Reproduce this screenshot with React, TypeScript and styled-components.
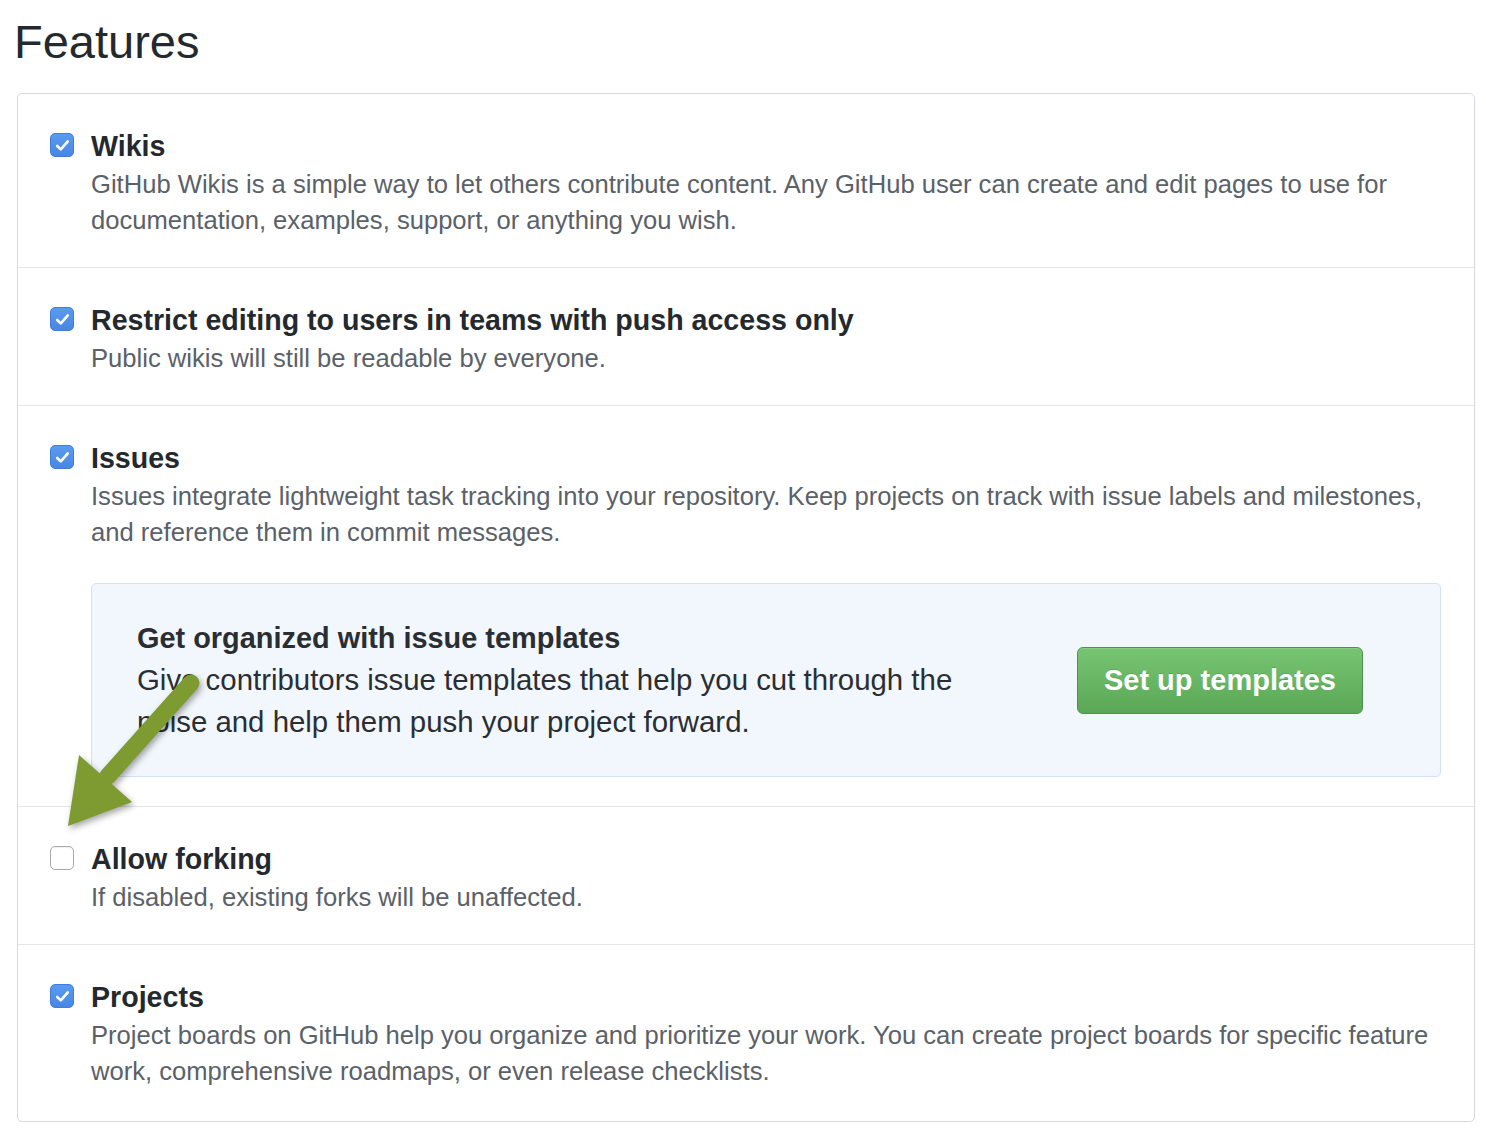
import React from "react";
import styled, { createGlobalStyle } from "styled-components";

const GlobalStyle = createGlobalStyle`
  html, body { margin: 0; padding: 0; background: #ffffff; }
  body {
    font-family: "Liberation Sans", Arial, Helvetica, sans-serif;
    color: #24292e;
    -webkit-font-smoothing: antialiased;
  }
  * { box-sizing: border-box; }
`;

const Page = styled.div`
  position: relative;
  width: 1486px;
  min-height: 1132px;
  padding: 18px 11px 12px 17px;
`;

const Heading = styled.h1`
  margin: 0 0 28px -3px;
  font-size: 47px;
  line-height: 47px;
  font-weight: 400;
  color: #24292e;
`;

const Box = styled.div`
  border: 1px solid #d6d9dd;
  border-radius: 5px;
  background: #fff;
`;

const Row = styled.div<{ $last?: boolean }>`
  display: flex;
  gap: 17px;
  padding: 34px 14px ${(p) => (p.$last ? "32px" : "29px")} 32px;
  & + & {
    border-top: 1px solid #e3e5e8;
  }
`;

const CheckBox = styled.span<{ $checked: boolean }>`
  flex: none;
  width: 24px;
  height: 24px;
  margin-top: 5px;
  border-radius: 5px;
  display: flex;
  align-items: center;
  justify-content: center;
  background: ${(p) => (p.$checked ? "linear-gradient(#5a9af0, #4787e3)" : "#ffffff")};
  border: ${(p) => (p.$checked ? "1px solid #3f7fd9" : "1.5px solid #a9a9a9")};
  box-shadow: ${(p) => (p.$checked ? "none" : "inset 0 1px 1px rgba(0,0,0,0.06)")};
`;

const Content = styled.div`
  flex: 1;
  min-width: 0;
`;

const Title = styled.div`
  font-size: 28.6px;
  line-height: 36px;
  font-weight: 700;
  color: #24292e;
  margin-bottom: 2px;
`;

const Desc = styled.div`
  font-size: 25.6px;
  line-height: 36px;
  color: #5a6168;
`;

const Notice = styled.div`
  margin: 33px 19px 0 0;
  padding: 33px 77px 33px 45px;
  background: #f2f7fe;
  border: 1px solid #d3e3f7;
  border-radius: 5px;
  display: flex;
  align-items: center;
  justify-content: space-between;
`;

const NoticeText = styled.div`
  max-width: 870px;
`;

const NoticeTitle = styled.div`
  font-size: 28.9px;
  line-height: 42px;
  font-weight: 700;
  color: #2a2e33;
`;

const NoticeBody = styled.div`
  font-size: 29.4px;
  line-height: 42px;
  color: #2a2e33;
`;

const GreenButton = styled.button`
  flex: none;
  height: 67px;
  padding: 0 26px;
  border: 1px solid #4b9447;
  border-radius: 6px;
  background: linear-gradient(#77c472, #5aa856);
  color: #ffffff;
  font-family: "Liberation Sans", Arial, Helvetica, sans-serif;
  font-size: 29px;
  font-weight: 700;
  text-shadow: 0 -1px 0 rgba(0, 0, 0, 0.12);
  box-shadow: inset 0 1px 0 rgba(255, 255, 255, 0.15);
  cursor: pointer;
`;

const ArrowOverlay = styled.svg`
  position: absolute;
  left: 50px;
  top: 660px;
  width: 170px;
  height: 185px;
  overflow: visible;
  pointer-events: none;
  filter: drop-shadow(2px 3px 3px rgba(0, 0, 0, 0.35));
`;

const Check = () => (
  <svg width="15" height="13" viewBox="0 0 15 13">
    <path d="M2.2 7 L5.8 10.4 L12.8 2.4" fill="none" stroke="#fff" strokeWidth="2.6" strokeLinecap="round" strokeLinejoin="round" />
  </svg>
);

type Item = { title: string; desc: string; checked: boolean };

const items: Item[] = [
  {
    title: "Wikis",
    desc: "GitHub Wikis is a simple way to let others contribute content. Any GitHub user can create and edit pages to use for documentation, examples, support, or anything you wish.",
    checked: true,
  },
  {
    title: "Restrict editing to users in teams with push access only",
    desc: "Public wikis will still be readable by everyone.",
    checked: true,
  },
  {
    title: "Issues",
    desc: "Issues integrate lightweight task tracking into your repository. Keep projects on track with issue labels and milestones, and reference them in commit messages.",
    checked: true,
  },
  {
    title: "Allow forking",
    desc: "If disabled, existing forks will be unaffected.",
    checked: false,
  },
  {
    title: "Projects",
    desc: "Project boards on GitHub help you organize and prioritize your work. You can create project boards for specific feature work, comprehensive roadmaps, or even release checklists.",
    checked: true,
  },
];

export default function App() {
  return (
    <Page>
      <GlobalStyle />
      <Heading>Features</Heading>
      <Box>
        {items.map((it, i) => (
          <Row key={it.title} $last={i === items.length - 1}>
            <CheckBox $checked={it.checked}>{it.checked && <Check />}</CheckBox>
            <Content>
              <Title>{it.title}</Title>
              <Desc>{it.desc}</Desc>
              {it.title === "Issues" && (
                <Notice>
                  <NoticeText>
                    <NoticeTitle>Get organized with issue templates</NoticeTitle>
                    <NoticeBody>
                      Give contributors issue templates that help you cut through the noise and help them push your project forward.
                    </NoticeBody>
                  </NoticeText>
                  <GreenButton>Set up templates</GreenButton>
                </Notice>
              )}
            </Content>
          </Row>
        ))}
      </Box>
      <ArrowOverlay viewBox="0 0 170 185">
        <line x1="141" y1="23" x2="58" y2="116" stroke="#7d9b30" strokeWidth="17" strokeLinecap="round" />
        <polygon points="18,166 29,95 82,142" fill="#7d9b30" />
      </ArrowOverlay>
    </Page>
  );
}
